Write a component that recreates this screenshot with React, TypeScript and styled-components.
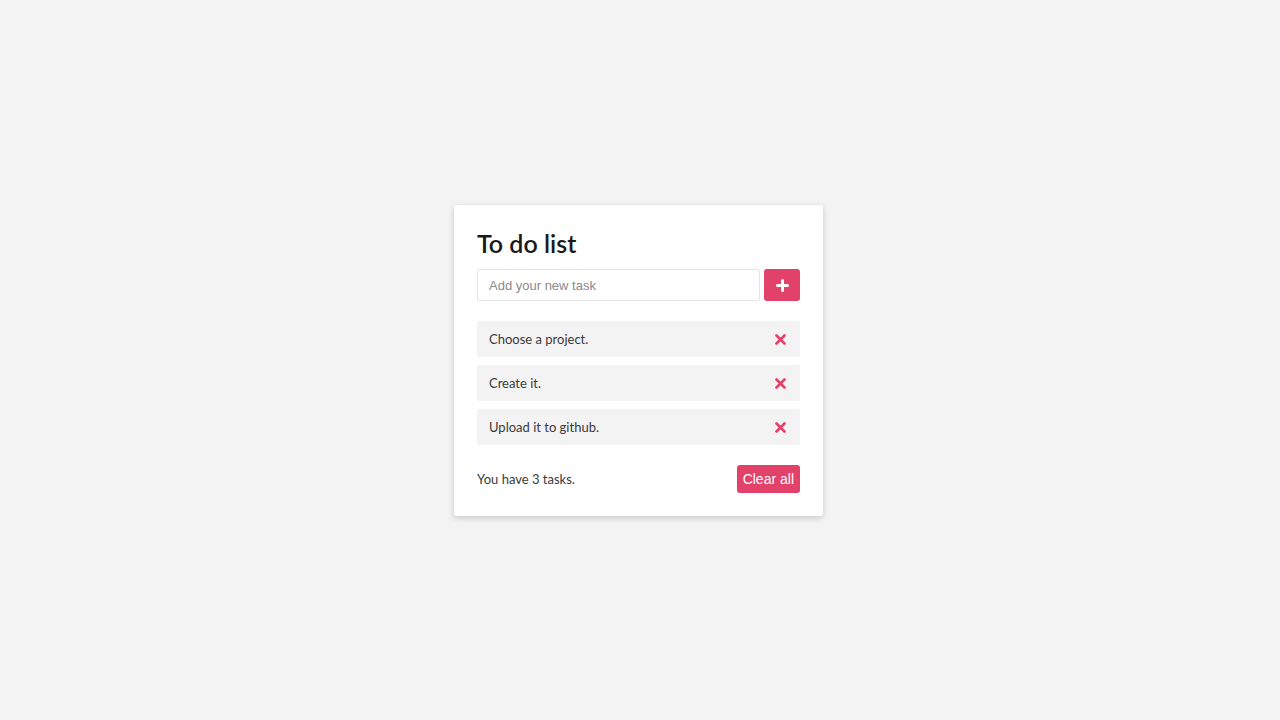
import React, { useState } from 'react'
import styled, { createGlobalStyle } from 'styled-components'

const colors = {
  page: '#f3f3f3',
  pink: '#e2416a',
  item: '#f3f3f3',
  text: '#3a3a3a',
  title: '#1a1a1a',
}

const GlobalStyle = createGlobalStyle`
  * { box-sizing: border-box; }
  body {
    margin: 0;
    background: ${colors.page};
    font-family: 'Lato', 'Noto Sans', sans-serif;
  }
`

const Page = styled.div`
  width: 100%;
  height: 720px;
  display: flex;
  align-items: center;
  justify-content: center;
  padding: 1px 3px 0 0;
`

const Card = styled.div`
  width: 369px;
  background: #fff;
  border-radius: 3px;
  padding: 23px 23px 23px;
  box-shadow: 0 2px 6px rgba(0, 0, 0, 0.18);
`

const Title = styled.h1`
  margin: 0 0 11px;
  font-size: 25px;
  line-height: 30px;
  font-weight: 600;
  color: ${colors.title};
`

const InputRow = styled.div`
  display: flex;
  gap: 4px;
  height: 32px;
`

const TaskInput = styled.input`
  flex: 1;
  height: 100%;
  border: 1px solid #e4e4e4;
  border-radius: 2px;
  padding: 0 11px;
  font-family: 'Liberation Sans', Arial, sans-serif;
  font-size: 13px;
  outline: none;
  &::placeholder {
    color: #8a8a8a;
  }
`

const IconButton = styled.button`
  width: 36px;
  height: 32px;
  border: none;
  border-radius: 3px;
  background: ${colors.pink};
  display: flex;
  align-items: center;
  justify-content: center;
  cursor: pointer;
  padding: 0;
`

const TaskList = styled.ul`
  list-style: none;
  margin: 20px 0 0;
  padding: 0;
  display: flex;
  flex-direction: column;
  gap: 8px;
`

const TaskItem = styled.li`
  height: 36px;
  background: ${colors.item};
  border-radius: 2px;
  display: flex;
  align-items: center;
  justify-content: space-between;
  padding: 0 14px 0 12px;
  font-size: 13px;
  color: ${colors.text};
`

const DeleteButton = styled.button`
  border: none;
  background: transparent;
  padding: 0;
  display: flex;
  cursor: pointer;
`

const Footer = styled.div`
  margin-top: 20px;
  display: flex;
  align-items: center;
  justify-content: space-between;
  font-size: 13px;
  color: ${colors.text};
`

const ClearButton = styled.button`
  height: 28px;
  padding: 0 6px;
  border: none;
  border-radius: 3px;
  background: ${colors.pink};
  color: #fff;
  font-family: 'Liberation Sans', Arial, sans-serif;
  font-size: 14px;
  cursor: pointer;
`

const PlusIcon = () => (
  <svg width="13" height="13" viewBox="0 0 13 13">
    <path d="M6.5 1.5v10M1.5 6.5h10" stroke="#fff" strokeWidth="3" strokeLinecap="round" />
  </svg>
)

const CrossIcon = () => (
  <svg width="11" height="11" viewBox="0 0 11 11">
    <path d="M1.5 1.5l8 8M9.5 1.5l-8 8" stroke={colors.pink} strokeWidth="2.6" strokeLinecap="round" />
  </svg>
)

export default function App() {
  const [tasks, setTasks] = useState(['Choose a project.', 'Create it.', 'Upload it to github.'])
  const [value, setValue] = useState('')

  const addTask = () => {
    if (!value.trim()) return
    setTasks([...tasks, value.trim()])
    setValue('')
  }

  return (
    <Page>
      <GlobalStyle />
      <Card>
        <Title>To do list</Title>
        <InputRow>
          <TaskInput placeholder="Add your new task" value={value} onChange={(e) => setValue(e.target.value)} />
          <IconButton onClick={addTask}>
            <PlusIcon />
          </IconButton>
        </InputRow>
        <TaskList>
          {tasks.map((task, i) => (
            <TaskItem key={i}>
              {task}
              <DeleteButton onClick={() => setTasks(tasks.filter((_, j) => j !== i))}>
                <CrossIcon />
              </DeleteButton>
            </TaskItem>
          ))}
        </TaskList>
        <Footer>
          <span>You have {tasks.length} tasks.</span>
          <ClearButton onClick={() => setTasks([])}>Clear all</ClearButton>
        </Footer>
      </Card>
    </Page>
  )
}
